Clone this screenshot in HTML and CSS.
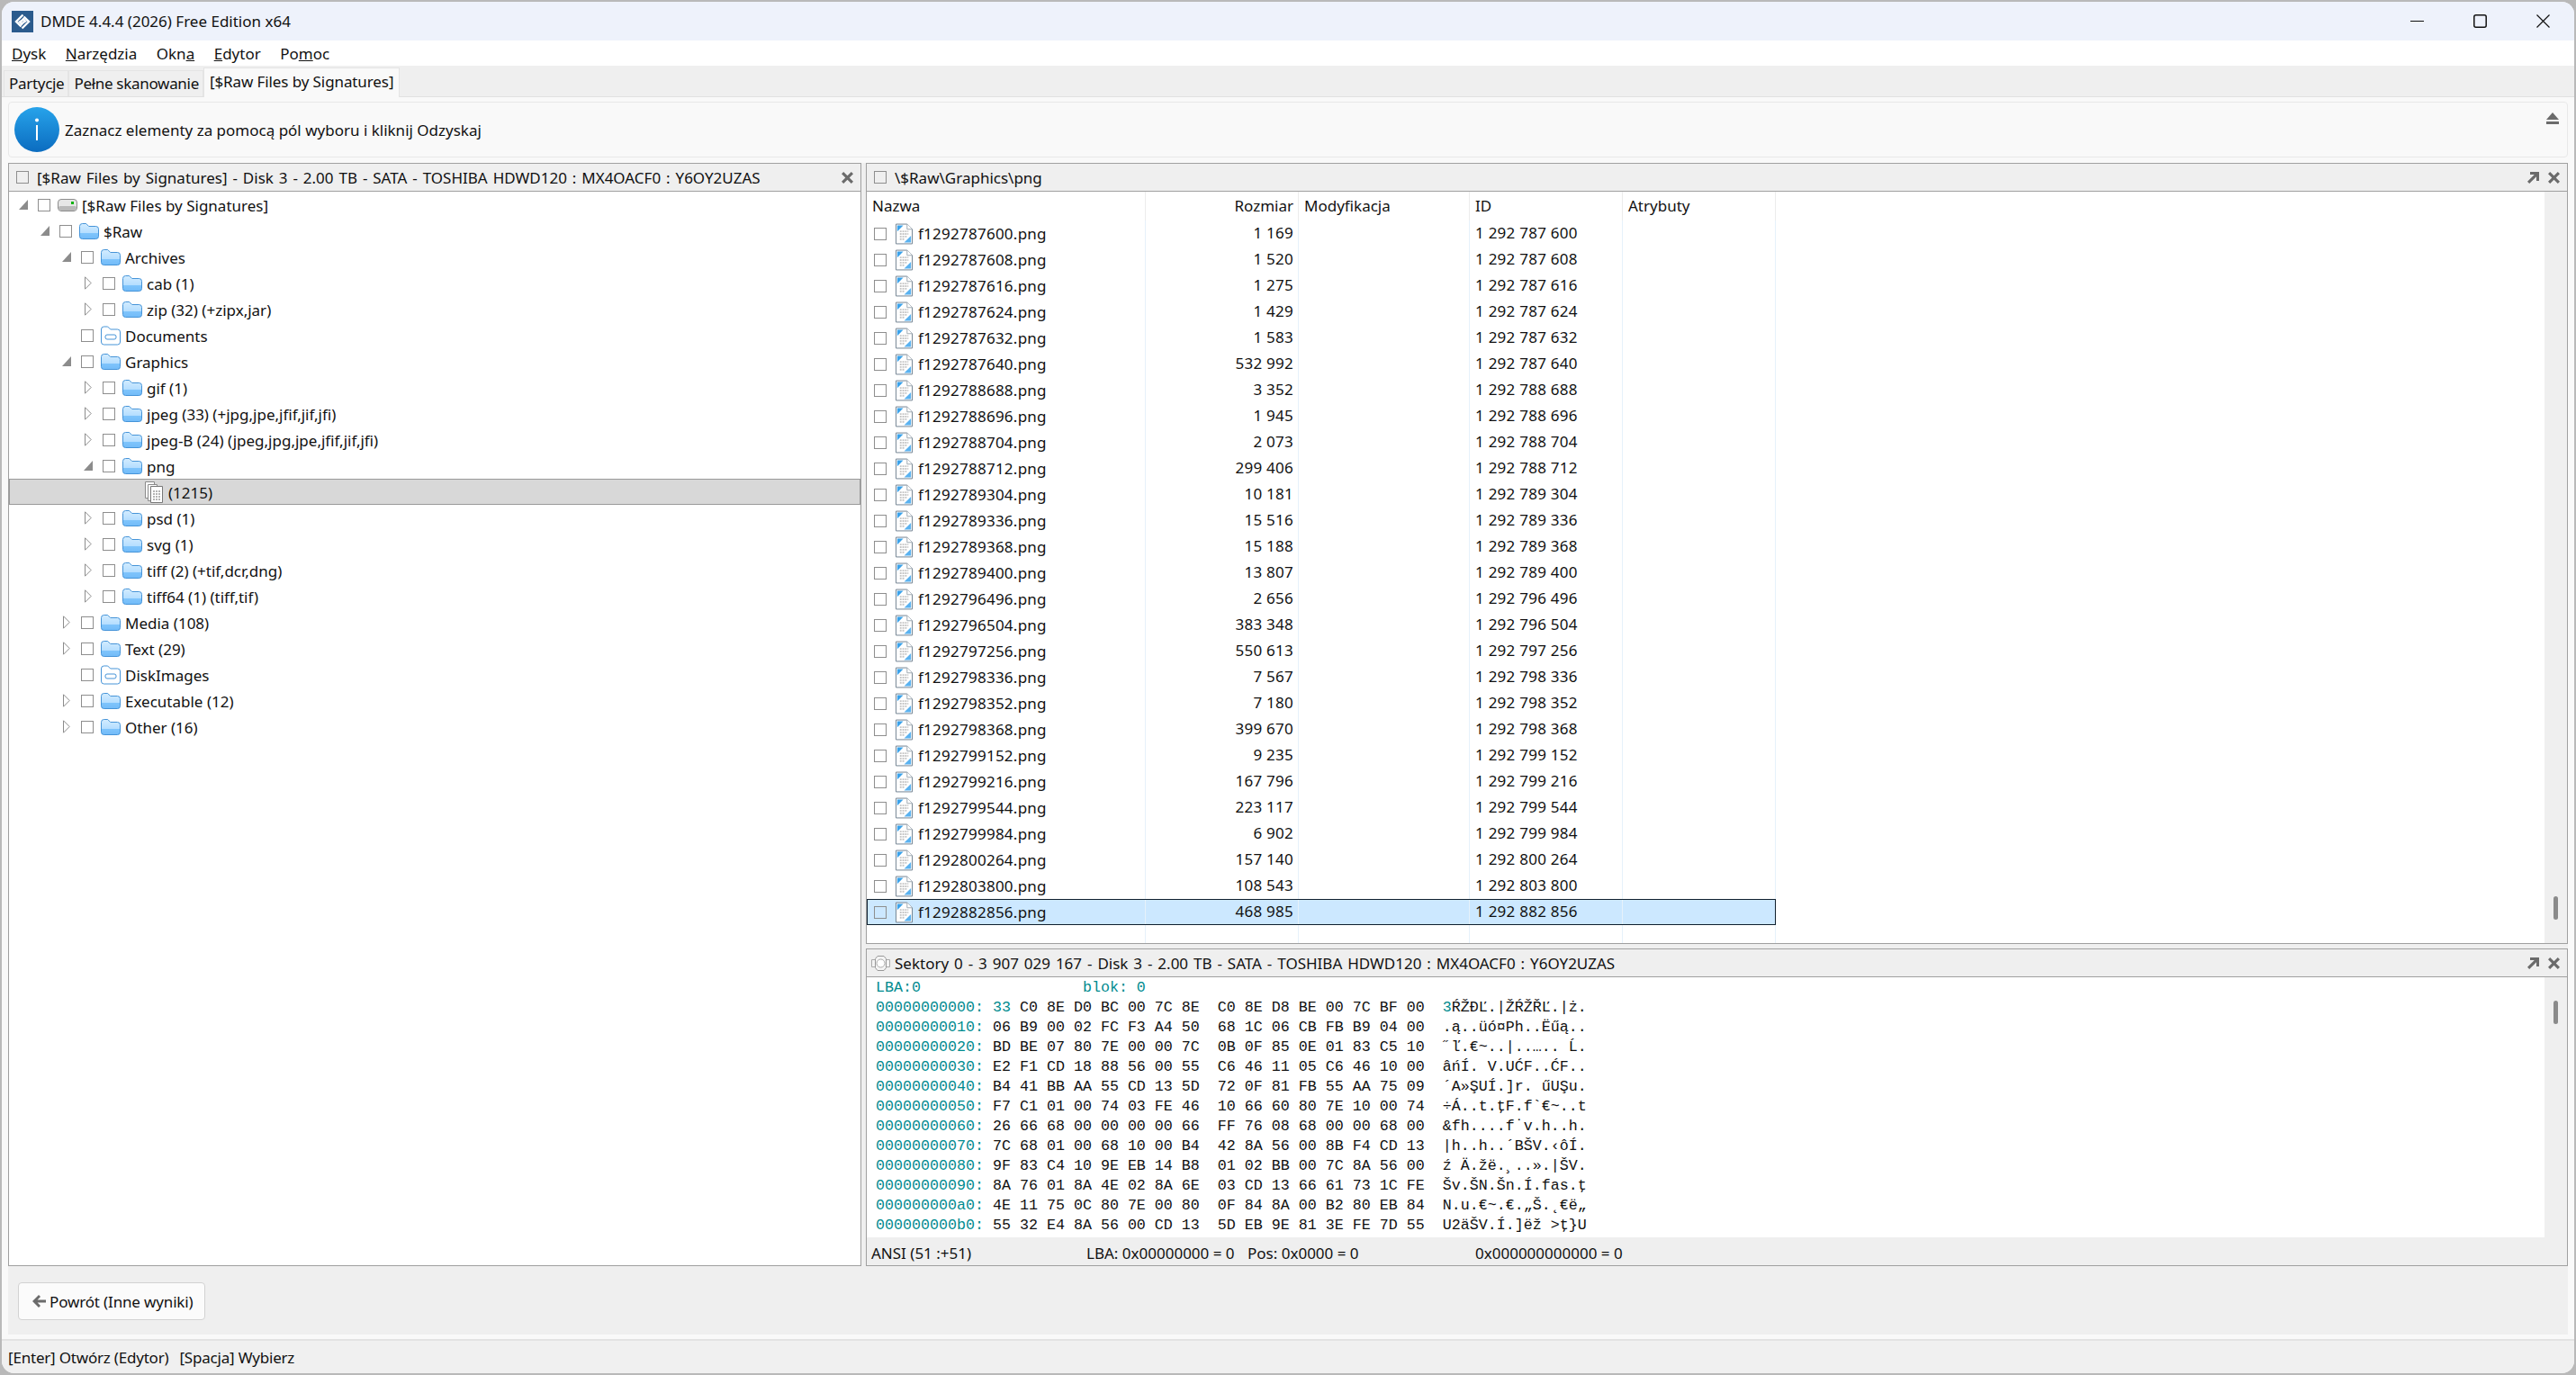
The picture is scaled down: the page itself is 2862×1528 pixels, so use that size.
FILE: index.html
```html
<!DOCTYPE html>
<html lang="pl">
<head>
  <meta charset="UTF-8">
  <title>DMDE 4.4.4 (2026) Free Edition x64</title>
  <link rel="stylesheet" href="styles.css">
</head>
<body>
  <!-- shared icons -->
  <svg class="defs" xmlns="http://www.w3.org/2000/svg">
    <defs>
      <linearGradient id="folderFill" x1="0" y1="0" x2="0" y2="1">
        <stop offset="0" stop-color="#d3ecff"/>
        <stop offset="0.6" stop-color="#b5deff"/>
        <stop offset="0.6" stop-color="#80c5fc"/>
        <stop offset="1" stop-color="#72bbf8"/>
      </linearGradient>
      <linearGradient id="infoFill" x1="0" y1="0" x2="0" y2="1">
        <stop offset="0" stop-color="#27a3ea"/>
        <stop offset="1" stop-color="#0b6cc0"/>
      </linearGradient>
    </defs>
    <symbol id="folder" viewBox="0 0 22 18">
      <path d="M.5 3.500a3 3 0 0 1 3-3h4.200l3 3h7.800a3 3 0 0 1 3 3v8a3 3 0 0 1-3 3h-15a3 3 0 0 1-3-3z" fill="url(#folderFill)" stroke="#4694d8"/>
    </symbol>
    <symbol id="folder-plain" viewBox="0 0 22 22">
      <path d="M.5 4a3 3 0 0 1 3-3h4.200l3 3h7.800a3 3 0 0 1 3 3v11a3 3 0 0 1-3 3h-15a3 3 0 0 1-3-3z" fill="#fff" stroke="#4694d8"/>
      <rect x="5" y="10" width="12" height="5" rx="2" fill="#fff" stroke="#4694d8"/>
    </symbol>
    <symbol id="drive" viewBox="0 0 22 14">
      <rect x=".5" y=".5" width="21" height="13" rx="3.500" fill="#e6e6e6" stroke="#8d8d8d"/>
      <rect x="1" y="8" width="20" height="5" rx="2" fill="#b9b9b9"/>
      <rect x="15" y="3" width="3" height="3" fill="#12b312"/>
    </symbol>
    <symbol id="file" viewBox="0 0 20 24">
      <path d="M.5.500h13l6 6v17H.5z" fill="#fff" stroke="#6f7f8e"/>
      <path d="M13.500.5v6h6" fill="#fff" stroke="#9aa5ae"/>
      <path d="M5 9h10M5 12h10M5 15h9M5 18h5" stroke="#c4c4c4" stroke-width="2" stroke-dasharray="2 1" fill="none"/>
      <path d="M2 2h7l-7 7z" fill="#3aa2ea"/>
      <path d="M18 14v8h-8z" fill="#5ab2f0"/>
    </symbol>
    <symbol id="stack" viewBox="0 0 20 24">
      <path d="M.5.500h10v18H.5z" fill="#fff" stroke="#8a8a8a"/>
      <path d="M3.500 3.500h10v18h-10z" fill="#fff" stroke="#8a8a8a"/>
      <path d="M6.500 5.500h13v18h-13z" fill="#fff" stroke="#777"/>
      <path d="M9 11h8M9 14h8M9 17h8M9 20h8" stroke="#b4b4b4" stroke-width="2" stroke-dasharray="2 1" fill="none"/>
    </symbol>
    <symbol id="exp-open" viewBox="0 0 10 11">
      <path d="M10 0v11H0z" fill="#8c8c8c"/>
    </symbol>
    <symbol id="exp-closed" viewBox="0 0 8 15">
      <path d="M.5.800 7.200 7.500.5 14.200z" fill="#fff" stroke="#8c8c8c"/>
    </symbol>
    <symbol id="pop" viewBox="0 0 13 13">
      <path d="M3 0h10v10h-3V5.200L2.200 13 0 10.800 7.800 3H3z" fill="#6b6b6b"/>
    </symbol>
    <symbol id="cross" viewBox="0 0 13 13">
      <path d="M2.200 0 6.500 4.300 10.800 0 13 2.200 8.700 6.500 13 10.800 10.800 13 6.500 8.700 2.200 13 0 10.800 4.300 6.500 0 2.200z" fill="#6b6b6b"/>
    </symbol>
  </svg>

  <div class="window">
    <div class="titlebar">
      <svg class="logo" viewBox="0 0 24 24">
        <rect width="24" height="24" fill="#2b5b8d"/>
        <path d="M12.500 4.500 5 12l5.500 5.500M14 9l-5 3.500 3 3" fill="none" stroke="#fff" stroke-width="2.400"/>
        <path d="M11.500 19.500 19 12l-5.500-5.500M10 15l5-3.500-3-3" fill="none" stroke="#fff" stroke-width="2.400"/>
      </svg>
      <span class="title">DMDE 4.4.4 (2026) Free Edition x64</span>
      <div class="winctl">
        <svg width="15" height="15" viewBox="0 0 15 15"><path d="M0 7.500h15" stroke="#111" stroke-width="1.200"/></svg>
        <svg width="15" height="15" viewBox="0 0 15 15"><rect x=".8" y=".8" width="13.400" height="13.400" rx="2" fill="none" stroke="#111" stroke-width="1.500"/></svg>
        <svg width="15" height="15" viewBox="0 0 15 15"><path d="M.5.500l14 14M14.500.500l-14 14" stroke="#111" stroke-width="1.200"/></svg>
      </div>
    </div>

    <div class="menubar">
      <span><u>D</u>ysk</span>
      <span><u>N</u>arzędzia</span>
      <span>Okn<u>a</u></span>
      <span><u>E</u>dytor</span>
      <span>Po<u>m</u>oc</span>
    </div>

    <div class="tabs">
      <div class="tab">Partycje</div>
      <div class="tab">Pełne skanowanie</div>
      <div class="tab active">[$Raw Files by Signatures]</div>
    </div>

    <div class="main">
      <div class="info">
        <svg class="info-icon" viewBox="0 0 50 50">
          <circle cx="25" cy="25" r="25" fill="url(#infoFill)"/>
          <circle cx="25" cy="14.500" r="2" fill="#fff"/>
          <rect x="24" y="20" width="2" height="17" fill="#fff"/>
        </svg>
        <span class="info-text">Zaznacz elementy za pomocą pól wyboru i kliknij Odzyskaj</span>
        <svg class="eject" viewBox="0 0 14 13"><path d="M7 0l7 8H0zM0 10h14v3H0z" fill="#6b6b6b"/></svg>
      </div>

      <div class="workspace">
        <div class="panes">

          <div class="pane tree-pane">
            <div class="pane-head">
              <span class="check"></span>
              <span class="pane-title">[$Raw Files by Signatures] - Disk 3 - 2.00 TB - SATA - TOSHIBA HDWD120 : MX4OACF0 : Y6OY2UZAS</span>
              <svg class="btn-ico"><use href="#cross"/></svg>
            </div>
            <div class="tree">
              <div class="node lvl-0"><svg class="exp open"><use href="#exp-open"/></svg><span class="check"></span><svg class="ico drive"><use href="#drive"/></svg><span class="label">[$Raw Files by Signatures]</span></div>
              <div class="node lvl-1"><svg class="exp open"><use href="#exp-open"/></svg><span class="check"></span><svg class="ico"><use href="#folder"/></svg><span class="label">$Raw</span></div>
              <div class="node lvl-2"><svg class="exp open"><use href="#exp-open"/></svg><span class="check"></span><svg class="ico"><use href="#folder"/></svg><span class="label">Archives</span></div>
              <div class="node lvl-3"><svg class="exp"><use href="#exp-closed"/></svg><span class="check"></span><svg class="ico"><use href="#folder"/></svg><span class="label">cab (1)</span></div>
              <div class="node lvl-3"><svg class="exp"><use href="#exp-closed"/></svg><span class="check"></span><svg class="ico"><use href="#folder"/></svg><span class="label">zip (32) (+zipx,jar)</span></div>
              <div class="node lvl-2"><span class="exp"></span><span class="check"></span><svg class="ico plain"><use href="#folder-plain"/></svg><span class="label">Documents</span></div>
              <div class="node lvl-2"><svg class="exp open"><use href="#exp-open"/></svg><span class="check"></span><svg class="ico"><use href="#folder"/></svg><span class="label">Graphics</span></div>
              <div class="node lvl-3"><svg class="exp"><use href="#exp-closed"/></svg><span class="check"></span><svg class="ico"><use href="#folder"/></svg><span class="label">gif (1)</span></div>
              <div class="node lvl-3"><svg class="exp"><use href="#exp-closed"/></svg><span class="check"></span><svg class="ico"><use href="#folder"/></svg><span class="label">jpeg (33) (+jpg,jpe,jfif,jif,jfi)</span></div>
              <div class="node lvl-3"><svg class="exp"><use href="#exp-closed"/></svg><span class="check"></span><svg class="ico"><use href="#folder"/></svg><span class="label">jpeg-B (24) (jpeg,jpg,jpe,jfif,jif,jfi)</span></div>
              <div class="node lvl-3"><svg class="exp open"><use href="#exp-open"/></svg><span class="check"></span><svg class="ico"><use href="#folder"/></svg><span class="label">png</span></div>
              <div class="node lvl-4 current"><span class="exp"></span><span class="check hidden"></span><svg class="ico stack"><use href="#stack"/></svg><span class="label">(1215)</span></div>
              <div class="node lvl-3"><svg class="exp"><use href="#exp-closed"/></svg><span class="check"></span><svg class="ico"><use href="#folder"/></svg><span class="label">psd (1)</span></div>
              <div class="node lvl-3"><svg class="exp"><use href="#exp-closed"/></svg><span class="check"></span><svg class="ico"><use href="#folder"/></svg><span class="label">svg (1)</span></div>
              <div class="node lvl-3"><svg class="exp"><use href="#exp-closed"/></svg><span class="check"></span><svg class="ico"><use href="#folder"/></svg><span class="label">tiff (2) (+tif,dcr,dng)</span></div>
              <div class="node lvl-3"><svg class="exp"><use href="#exp-closed"/></svg><span class="check"></span><svg class="ico"><use href="#folder"/></svg><span class="label">tiff64 (1) (tiff,tif)</span></div>
              <div class="node lvl-2"><svg class="exp"><use href="#exp-closed"/></svg><span class="check"></span><svg class="ico"><use href="#folder"/></svg><span class="label">Media (108)</span></div>
              <div class="node lvl-2"><svg class="exp"><use href="#exp-closed"/></svg><span class="check"></span><svg class="ico"><use href="#folder"/></svg><span class="label">Text (29)</span></div>
              <div class="node lvl-2"><span class="exp"></span><span class="check"></span><svg class="ico plain"><use href="#folder-plain"/></svg><span class="label">DiskImages</span></div>
              <div class="node lvl-2"><svg class="exp"><use href="#exp-closed"/></svg><span class="check"></span><svg class="ico"><use href="#folder"/></svg><span class="label">Executable (12)</span></div>
              <div class="node lvl-2"><svg class="exp"><use href="#exp-closed"/></svg><span class="check"></span><svg class="ico"><use href="#folder"/></svg><span class="label">Other (16)</span></div>
            </div>
          </div>

          <div class="right-col">
            <div class="pane list-pane">
              <div class="pane-head">
                <span class="check"></span>
                <span class="pane-title">\$Raw\Graphics\png</span>
                <svg class="btn-ico"><use href="#pop"/></svg>
                <svg class="btn-ico"><use href="#cross"/></svg>
              </div>
              <div class="pane-body">
                <div class="list">
                  <div class="row heads"><div>Nazwa</div><div class="num">Rozmiar</div><div>Modyfikacja</div><div>ID</div><div>Atrybuty</div></div>
                  <div class="row"><div class="name"><span class="check"></span><svg class="file"><use href="#file"/></svg>f1292787600.png</div><div class="num">1 169</div><div></div><div>1 292 787 600</div><div></div></div>
                  <div class="row"><div class="name"><span class="check"></span><svg class="file"><use href="#file"/></svg>f1292787608.png</div><div class="num">1 520</div><div></div><div>1 292 787 608</div><div></div></div>
                  <div class="row"><div class="name"><span class="check"></span><svg class="file"><use href="#file"/></svg>f1292787616.png</div><div class="num">1 275</div><div></div><div>1 292 787 616</div><div></div></div>
                  <div class="row"><div class="name"><span class="check"></span><svg class="file"><use href="#file"/></svg>f1292787624.png</div><div class="num">1 429</div><div></div><div>1 292 787 624</div><div></div></div>
                  <div class="row"><div class="name"><span class="check"></span><svg class="file"><use href="#file"/></svg>f1292787632.png</div><div class="num">1 583</div><div></div><div>1 292 787 632</div><div></div></div>
                  <div class="row"><div class="name"><span class="check"></span><svg class="file"><use href="#file"/></svg>f1292787640.png</div><div class="num">532 992</div><div></div><div>1 292 787 640</div><div></div></div>
                  <div class="row"><div class="name"><span class="check"></span><svg class="file"><use href="#file"/></svg>f1292788688.png</div><div class="num">3 352</div><div></div><div>1 292 788 688</div><div></div></div>
                  <div class="row"><div class="name"><span class="check"></span><svg class="file"><use href="#file"/></svg>f1292788696.png</div><div class="num">1 945</div><div></div><div>1 292 788 696</div><div></div></div>
                  <div class="row"><div class="name"><span class="check"></span><svg class="file"><use href="#file"/></svg>f1292788704.png</div><div class="num">2 073</div><div></div><div>1 292 788 704</div><div></div></div>
                  <div class="row"><div class="name"><span class="check"></span><svg class="file"><use href="#file"/></svg>f1292788712.png</div><div class="num">299 406</div><div></div><div>1 292 788 712</div><div></div></div>
                  <div class="row"><div class="name"><span class="check"></span><svg class="file"><use href="#file"/></svg>f1292789304.png</div><div class="num">10 181</div><div></div><div>1 292 789 304</div><div></div></div>
                  <div class="row"><div class="name"><span class="check"></span><svg class="file"><use href="#file"/></svg>f1292789336.png</div><div class="num">15 516</div><div></div><div>1 292 789 336</div><div></div></div>
                  <div class="row"><div class="name"><span class="check"></span><svg class="file"><use href="#file"/></svg>f1292789368.png</div><div class="num">15 188</div><div></div><div>1 292 789 368</div><div></div></div>
                  <div class="row"><div class="name"><span class="check"></span><svg class="file"><use href="#file"/></svg>f1292789400.png</div><div class="num">13 807</div><div></div><div>1 292 789 400</div><div></div></div>
                  <div class="row"><div class="name"><span class="check"></span><svg class="file"><use href="#file"/></svg>f1292796496.png</div><div class="num">2 656</div><div></div><div>1 292 796 496</div><div></div></div>
                  <div class="row"><div class="name"><span class="check"></span><svg class="file"><use href="#file"/></svg>f1292796504.png</div><div class="num">383 348</div><div></div><div>1 292 796 504</div><div></div></div>
                  <div class="row"><div class="name"><span class="check"></span><svg class="file"><use href="#file"/></svg>f1292797256.png</div><div class="num">550 613</div><div></div><div>1 292 797 256</div><div></div></div>
                  <div class="row"><div class="name"><span class="check"></span><svg class="file"><use href="#file"/></svg>f1292798336.png</div><div class="num">7 567</div><div></div><div>1 292 798 336</div><div></div></div>
                  <div class="row"><div class="name"><span class="check"></span><svg class="file"><use href="#file"/></svg>f1292798352.png</div><div class="num">7 180</div><div></div><div>1 292 798 352</div><div></div></div>
                  <div class="row"><div class="name"><span class="check"></span><svg class="file"><use href="#file"/></svg>f1292798368.png</div><div class="num">399 670</div><div></div><div>1 292 798 368</div><div></div></div>
                  <div class="row"><div class="name"><span class="check"></span><svg class="file"><use href="#file"/></svg>f1292799152.png</div><div class="num">9 235</div><div></div><div>1 292 799 152</div><div></div></div>
                  <div class="row"><div class="name"><span class="check"></span><svg class="file"><use href="#file"/></svg>f1292799216.png</div><div class="num">167 796</div><div></div><div>1 292 799 216</div><div></div></div>
                  <div class="row"><div class="name"><span class="check"></span><svg class="file"><use href="#file"/></svg>f1292799544.png</div><div class="num">223 117</div><div></div><div>1 292 799 544</div><div></div></div>
                  <div class="row"><div class="name"><span class="check"></span><svg class="file"><use href="#file"/></svg>f1292799984.png</div><div class="num">6 902</div><div></div><div>1 292 799 984</div><div></div></div>
                  <div class="row"><div class="name"><span class="check"></span><svg class="file"><use href="#file"/></svg>f1292800264.png</div><div class="num">157 140</div><div></div><div>1 292 800 264</div><div></div></div>
                  <div class="row"><div class="name"><span class="check"></span><svg class="file"><use href="#file"/></svg>f1292803800.png</div><div class="num">108 543</div><div></div><div>1 292 803 800</div><div></div></div>
                  <div class="row selected"><div class="name"><span class="check"></span><svg class="file"><use href="#file"/></svg>f1292882856.png</div><div class="num">468 985</div><div></div><div>1 292 882 856</div><div></div></div>
                  <div class="row rest"><div></div><div></div><div></div><div></div><div></div></div>
                </div>
                <div class="scroll to-end"><span class="thumb"></span></div>
              </div>
            </div>

            <div class="pane hex-pane">
              <div class="pane-head">
                <svg class="disk" viewBox="0 0 21 18">
                  <path d="M.5 5.500h4v8h-4zM16.500 5.500h4v8h-4z" fill="#f4f4f4" stroke="#aaa"/>
                  <path d="M4.500 4.500 7 1.500h7l2.500 3v10l-2.500 3H7l-2.500-3z" fill="#f4f4f4" stroke="#999"/>
                  <circle cx="10.500" cy="9.500" r="4.500" fill="#fff" stroke="#aaa"/>
                </svg>
                <span class="pane-title">Sektory 0 - 3 907 029 167 - Disk 3 - 2.00 TB - SATA - TOSHIBA HDWD120 : MX4OACF0 : Y6OY2UZAS</span>
                <svg class="btn-ico"><use href="#pop"/></svg>
                <svg class="btn-ico"><use href="#cross"/></svg>
              </div>
              <div class="pane-body">
<pre class="hex"><span class="teal">LBA:0                  blok: 0</span>
<span class="teal">00000000000: 33</span> C0 8E D0 BC 00 7C 8E  C0 8E D8 BE 00 7C BF 00  <span class="teal">3</span>ŔŽĐĽ.|ŽŔŽŘĽ.|ż.
<span class="teal">00000000010:</span> 06 B9 00 02 FC F3 A4 50  68 1C 06 CB FB B9 04 00  .ą..üó¤Ph..Ëűą..
<span class="teal">00000000020:</span> BD BE 07 80 7E 00 00 7C  0B 0F 85 0E 01 83 C5 10  ˝ľ.€~..|..….. Ĺ.
<span class="teal">00000000030:</span> E2 F1 CD 18 88 56 00 55  C6 46 11 05 C6 46 10 00  âńÍ. V.UĆF..ĆF..
<span class="teal">00000000040:</span> B4 41 BB AA 55 CD 13 5D  72 0F 81 FB 55 AA 75 09  ´A»ŞUÍ.]r. űUŞu.
<span class="teal">00000000050:</span> F7 C1 01 00 74 03 FE 46  10 66 60 80 7E 10 00 74  ÷Á..t.ţF.f`€~..t
<span class="teal">00000000060:</span> 26 66 68 00 00 00 00 66  FF 76 08 68 00 00 68 00  &amp;fh....f˙v.h..h.
<span class="teal">00000000070:</span> 7C 68 01 00 68 10 00 B4  42 8A 56 00 8B F4 CD 13  |h..h..´BŠV.‹ôÍ.
<span class="teal">00000000080:</span> 9F 83 C4 10 9E EB 14 B8  01 02 BB 00 7C 8A 56 00  ź Ä.žë.¸..».|ŠV.
<span class="teal">00000000090:</span> 8A 76 01 8A 4E 02 8A 6E  03 CD 13 66 61 73 1C FE  Šv.ŠN.Šn.Í.fas.ţ
<span class="teal">000000000a0:</span> 4E 11 75 0C 80 7E 00 80  0F 84 8A 00 B2 80 EB 84  N.u.€~.€.„Š.˛€ë„
<span class="teal">000000000b0:</span> 55 32 E4 8A 56 00 CD 13  5D EB 9E 81 3E FE 7D 55  U2äŠV.Í.]ëž &gt;ţ}U</pre>
                <div class="scroll"><span class="thumb"></span></div>
              </div>
              <div class="hex-status">
                <span>ANSI (51 :+51)</span>
                <span>LBA: 0x00000000 = 0</span>
                <span>Pos: 0x0000 = 0</span>
                <span>0x000000000000 = 0</span>
              </div>
            </div>
          </div>
        </div>

        <div class="actions">
          <button class="back">
            <svg viewBox="0 0 15 14"><path d="M7 0l2 2-3.400 3.500H15v3H5.600L9 12l-2 2-7-7z" fill="#6b6b6b"/></svg>
            Powrót (Inne wyniki)
          </button>
        </div>
      </div>
    </div>

    <div class="statusbar">
      <span>[Enter] Otwórz (Edytor)</span>
      <span>[Spacja] Wybierz</span>
    </div>
  </div>
</body>
</html>
```

FILE: styles.css
```css
* {
  box-sizing: border-box;
}
html, body {
  margin: 0;
  height: 100%;
}
body {
  background-color: #b9b9b9;
  padding: 2px;
  font-family: "Noto Sans", sans-serif;
  font-size: 17px;
  color: #111;
  overflow: hidden;
}
.defs {
  position: absolute;
  width: 0;
  height: 0;
}

.window {
  display: flex;
  flex-direction: column;
  height: 100%;
  border-radius: 14px;
  overflow: hidden;
  background-color: #f9f9f9;
}

/* title bar */
.titlebar {
  display: flex;
  align-items: center;
  flex: 0 0 43px;
  padding-left: 11px;
  background-color: #eef2fb;
}
.logo {
  width: 24px;
  height: 24px;
  margin-right: 8px;
}
.winctl {
  display: flex;
  margin-left: auto;
  margin-right: 27px;
  gap: 55px;
}

/* menu + tabs */
.menubar {
  display: flex;
  align-items: center;
  flex: 0 0 28px;
  padding-left: 11px;
  gap: 21.5px;
  background-color: #fff;
}
.tabs {
  display: flex;
  align-items: flex-end;
  flex: 0 0 35px;
  padding-left: 2px;
  background-color: #efefef;
  border-bottom: 1px solid #e0e0e0;
  letter-spacing: -.3px;
}
.tab {
  padding: 0 4px 0 5px;
  height: 29px;
  line-height: 28px;
  border: 1px solid #e4e4e4;
  border-bottom: 0;
}
.tab.active {
  height: 33px;
  line-height: 29px;
  margin-bottom: -1px;
  padding: 0 6px;
  letter-spacing: -.1px;
  background-color: #f9f9f9;
}

/* main area */
.main {
  display: flex;
  flex-direction: column;
  flex: 1;
  min-height: 0;
  padding: 5px 7px;
}
.info {
  display: flex;
  align-items: center;
  flex: 0 0 62px;
  margin-bottom: 6px;
  padding-left: 6px;
  border: 1px solid #e8e8e8;
  border-radius: 4px;
  background-color: #f9f9f9;
}
.info-icon {
  width: 50px;
  height: 50px;
  margin-right: 6px;
}
.eject {
  align-self: flex-start;
  width: 14px;
  height: 13px;
  margin: 11px 9px 0 auto;
}
.workspace {
  display: flex;
  flex-direction: column;
  flex: 1;
  min-height: 0;
  background-color: #efefef;
}
.panes {
  display: flex;
  flex: 1;
  min-height: 0;
  gap: 5px;
}
.right-col {
  display: flex;
  flex-direction: column;
  flex: 1;
  gap: 5px;
  min-width: 0;
}

/* panes */
.pane {
  display: flex;
  flex-direction: column;
  border: 1px solid #a0a0a0;
  background-color: #fff;
  min-height: 0;
}
.tree-pane {
  flex: 0 0 948px;
}
.list-pane {
  flex: 0 0 868px;
}
.hex-pane {
  flex: 1;
}
.pane-head {
  display: flex;
  align-items: center;
  flex: 0 0 31px;
  padding: 0 8px;
  background-color: #efefef;
  border-bottom: 1px solid #a0a0a0;
}
.pane-head .check {
  margin-right: 9px;
}
.pane-title {
  flex: 1;
  white-space: nowrap;
  word-spacing: 1.5px;
}
.btn-ico {
  width: 13px;
  height: 13px;
  margin-left: 10px;
}
.disk {
  width: 21px;
  height: 18px;
  margin-left: -3px;
  margin-right: 5px;
}
.pane-body {
  display: flex;
  flex: 1;
  min-height: 0;
}
.check {
  flex: none;
  width: 14px;
  height: 14px;
  border: 1px solid #8e8e8e;
  background-color: #fff;
}
.hidden {
  visibility: hidden;
}
.pane-head .check {
  background-color: transparent;
}

/* tree */
.node {
  display: flex;
  align-items: center;
  height: 29px;
  white-space: nowrap;
}
.node .exp {
  flex: none;
  width: 10px;
  height: 15px;
  margin-right: 11px;
}
.node .check {
  margin-right: 8px;
}
.label {
  padding-top: 2px;
}
.ico {
  flex: none;
  width: 22px;
  height: 18px;
  margin-right: 5px;
}
.ico.plain {
  height: 22px;
}
.ico.drive {
  height: 14px;
}
.ico.stack {
  height: 24px;
}
.lvl-0 { padding-left: 11px; }
.lvl-1 { padding-left: 35px; }
.lvl-2 { padding-left: 59px; }
.lvl-3 { padding-left: 83px; }
.lvl-4 { padding-left: 107px; }
.current {
  background-color: #d8d8d8;
  outline: 1px solid #9a9a9a;
  outline-offset: -1px;
}

/* file list */
.list {
  display: flex;
  flex-direction: column;
  flex: 1;
  min-width: 0;
}
.row {
  display: grid;
  grid-template-columns: 310px 170px 190px 170px 170px;
  flex: 0 0 29px;
  width: 1010px;
  line-height: 28px;
  letter-spacing: .25px;
  white-space: nowrap;
}
.row > div {
  padding-left: 6px;
  border-right: 1px solid #e6f1fa;
}
.row > .num {
  padding: 0 5px 0 0;
  text-align: right;
}
.row.heads {
  flex-basis: 32px;
  line-height: 32px;
  letter-spacing: 0;
}
.row.heads > div {
  padding-left: 6px;
  border-right-color: #ececec;
}
.row.heads > .num {
  padding: 0 5px 0 0;
}
.row > .name {
  display: flex;
  align-items: center;
  padding-left: 8px;
}
.name .check {
  margin-right: 10px;
}
.file {
  flex: none;
  width: 19px;
  height: 24px;
  margin-right: 6px;
}
.row.selected {
  background-color: #cce8ff;
  outline: 1px solid #10202e;
  outline-offset: -1px;
}
.row.selected .check {
  background-color: transparent;
}
.row.rest {
  flex: 1;
}
.scroll {
  display: flex;
  flex: 0 0 25px;
  flex-direction: column;
  align-items: center;
  padding-top: 26px;
  background-color: #efefef;
}
.scroll.to-end {
  justify-content: flex-end;
  padding: 0 0 26px;
}
.thumb {
  width: 5px;
  height: 26px;
  border-radius: 3px;
  background-color: #8a8a8a;
}

/* hex dump */
.hex {
  flex: 1;
  min-width: 0;
  margin: 0;
  padding: 1px 0 0 10px;
  overflow: hidden;
  font-family: "Liberation Mono", monospace;
  font-size: 16.67px;
  line-height: 22px;
  color: #111;
}
.teal {
  color: #008b8f;
}
.hex-status {
  display: grid;
  grid-template-columns: 239px 179px 253px auto;
  flex: 0 0 31px;
  padding: 4px 0 0 5px;
  line-height: 27px;
  background-color: #efefef;
}

/* bottom */
.actions {
  display: flex;
  align-items: center;
  flex: 0 0 76px;
  padding: 2px 11px 0;
}
.back {
  display: flex;
  align-items: center;
  height: 42px;
  width: 208px;
  padding: 0 0 0 15px;
  border: 1px solid #d2d2d2;
  border-radius: 4px;
  background-color: #fbfbfb;
  font-family: inherit;
  font-size: 17px;
  letter-spacing: -.15px;
  color: #111;
}
.back svg {
  width: 15px;
  height: 14px;
  margin-right: 4px;
}
.statusbar {
  display: flex;
  align-items: center;
  flex: 0 0 38px;
  padding-left: 7px;
  gap: 12px;
  letter-spacing: -.2px;
  background-color: #f0f0f0;
  border-top: 2px solid #e3e3e3;
}
```
